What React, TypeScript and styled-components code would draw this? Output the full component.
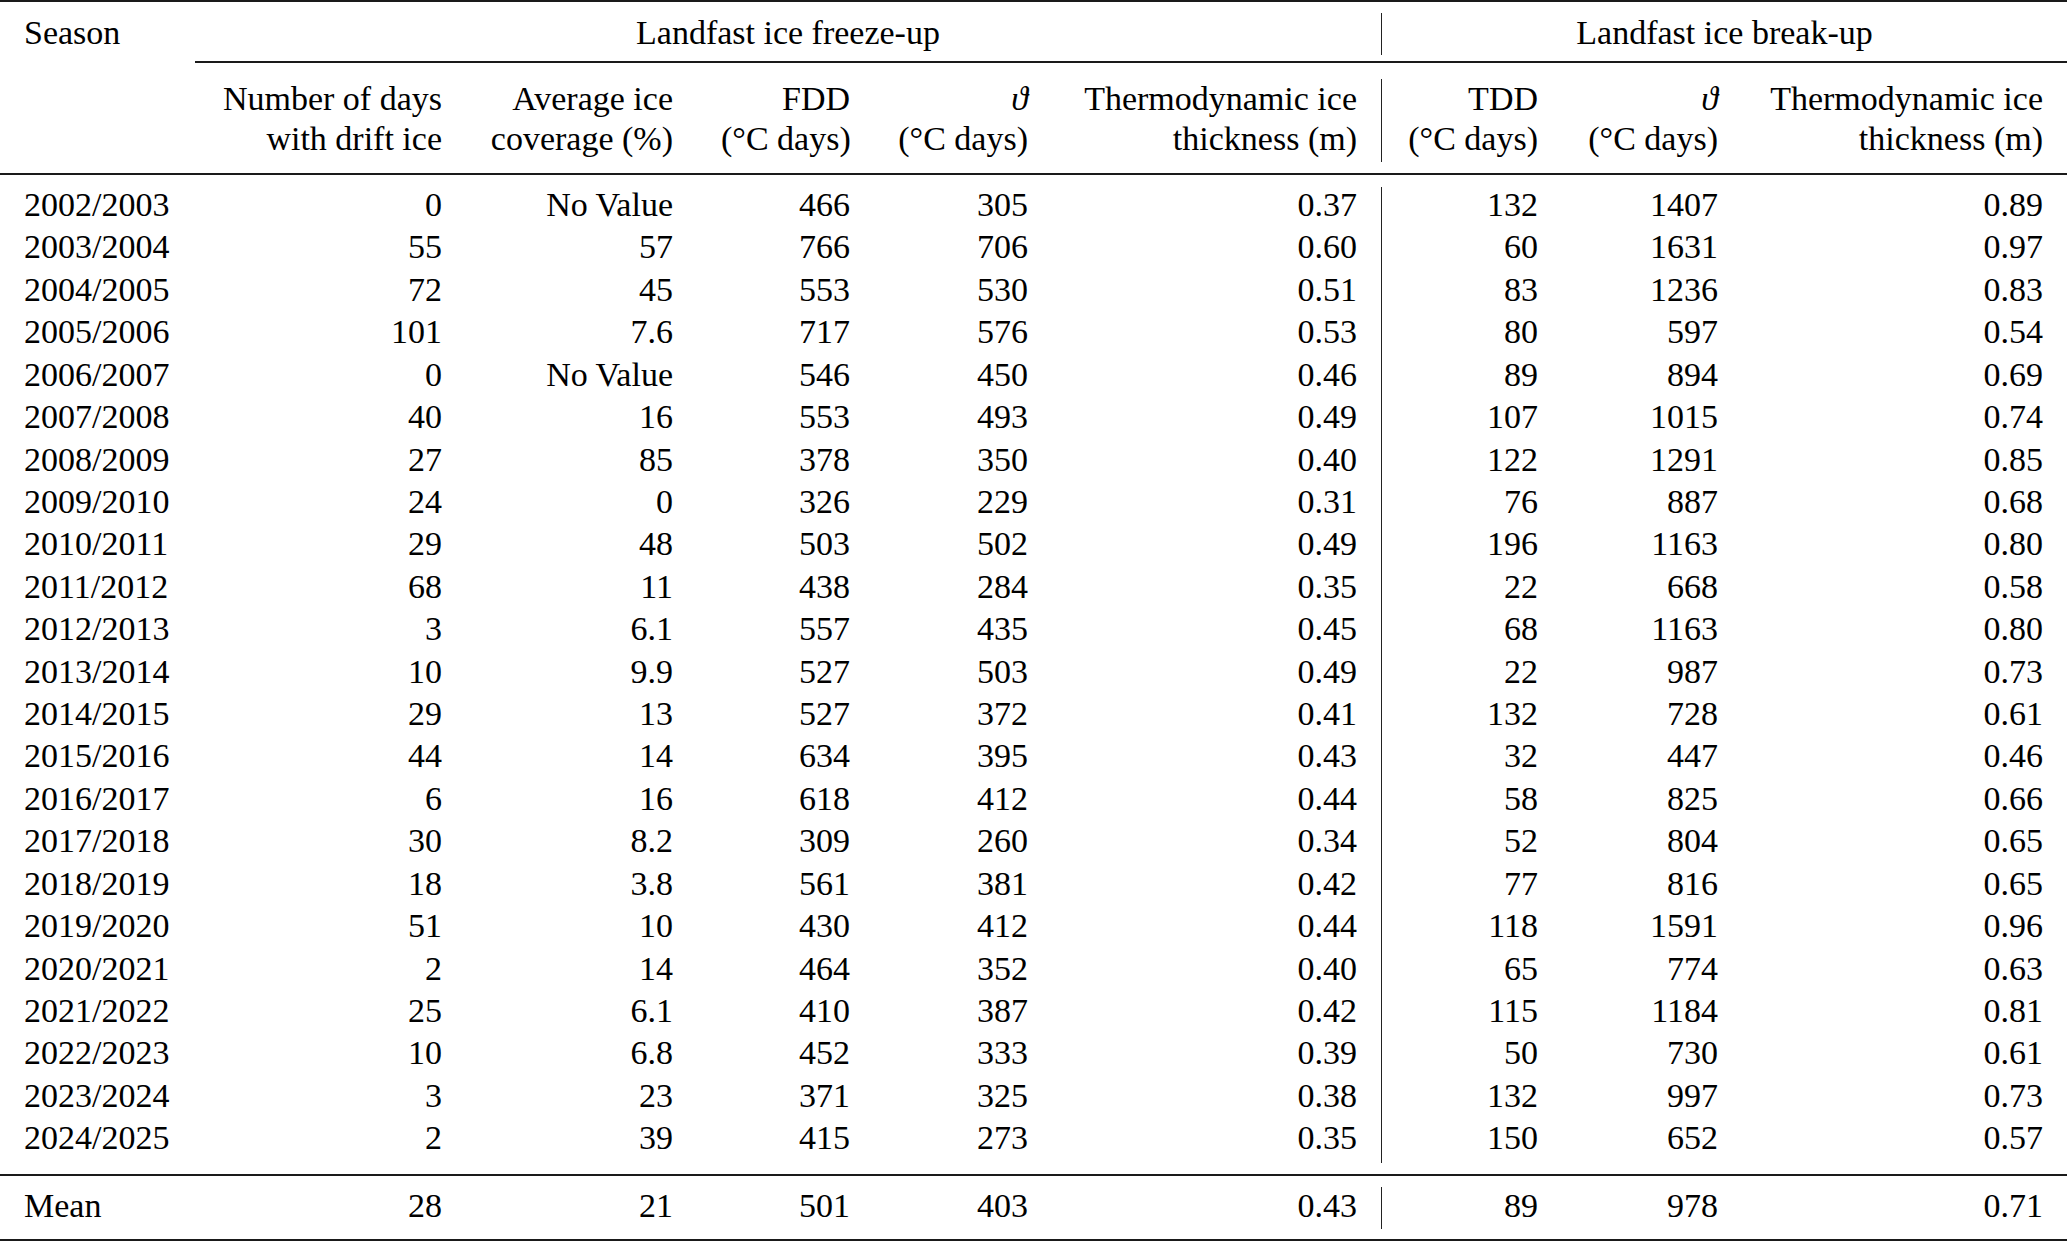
import React from "react";
import styled, { createGlobalStyle } from "styled-components";

const GlobalStyle = createGlobalStyle`
  html, body {
    margin: 0;
    padding: 0;
    background: #ffffff;
    overflow: hidden;
  }
  body {
    font-family: "Liberation Serif", "Times New Roman", "DejaVu Serif", serif;
    color: #000000;
    font-size: 34px;
  }
`;

const COLS = "195px 271px 231px 177px 178px 329px 181px 180px 325px";

const Table = styled.div`
  width: 2067px;
  display: flex;
  flex-direction: column;
`;

const Rule = styled.div<{ $gap: number; $inset?: number }>`
  height: 2px;
  background: #1a1a1a;
  margin-top: ${(p) => p.$gap}px;
  margin-left: ${(p) => p.$inset ?? 0}px;
`;

const GroupRow = styled.div`
  display: grid;
  grid-template-columns: ${COLS};
  margin-top: 11px;
  line-height: 39.6px;
`;

const GroupCell = styled.div<{ $start: number; $end: number; $divider?: boolean }>`
  grid-column: ${(p) => p.$start} / ${(p) => p.$end};
  text-align: center;
  padding-bottom: 2.8px;
  white-space: nowrap;
  border-left: ${(p) => (p.$divider ? "1px solid #222" : "none")};
`;

const SeasonHead = styled.div`
  grid-column: 1 / 2;
  padding-left: 24px;
  padding-bottom: 2.8px;
  white-space: nowrap;
`;

const HeadRow = styled.div`
  display: grid;
  grid-template-columns: ${COLS};
  margin-top: 16px;
  line-height: 40px;
`;

const HeadCell = styled.div<{ $divider?: boolean }>`
  text-align: right;
  padding: 0 24px 3px 24px;
  white-space: nowrap;
  border-left: ${(p) => (p.$divider ? "1px solid #222" : "none")};
`;

const Body = styled.div`
  display: flex;
  flex-direction: column;
  margin-top: 12px;
`;

const Row = styled.div<{ $mean?: boolean }>`
  display: grid;
  grid-template-columns: ${COLS};
  line-height: ${(p) => (p.$mean ? "38px" : "36.5px")};
  margin-top: ${(p) => (p.$mean ? "11px" : "0")};
`;

const Cell = styled.div<{ $left?: boolean; $divider?: boolean; $mean?: boolean }>`
  text-align: ${(p) => (p.$left ? "left" : "right")};
  padding: 0 24px ${(p) => (p.$mean ? "4.4px" : "5.93px")} 24px;
  white-space: nowrap;
  border-left: ${(p) => (p.$divider ? "1px solid #222" : "none")};
`;

const Theta = styled.span`
  font-style: italic;
`;

const rows: string[][] = [
  ["2002/2003", "0", "No Value", "466", "305", "0.37", "132", "1407", "0.89"],
  ["2003/2004", "55", "57", "766", "706", "0.60", "60", "1631", "0.97"],
  ["2004/2005", "72", "45", "553", "530", "0.51", "83", "1236", "0.83"],
  ["2005/2006", "101", "7.6", "717", "576", "0.53", "80", "597", "0.54"],
  ["2006/2007", "0", "No Value", "546", "450", "0.46", "89", "894", "0.69"],
  ["2007/2008", "40", "16", "553", "493", "0.49", "107", "1015", "0.74"],
  ["2008/2009", "27", "85", "378", "350", "0.40", "122", "1291", "0.85"],
  ["2009/2010", "24", "0", "326", "229", "0.31", "76", "887", "0.68"],
  ["2010/2011", "29", "48", "503", "502", "0.49", "196", "1163", "0.80"],
  ["2011/2012", "68", "11", "438", "284", "0.35", "22", "668", "0.58"],
  ["2012/2013", "3", "6.1", "557", "435", "0.45", "68", "1163", "0.80"],
  ["2013/2014", "10", "9.9", "527", "503", "0.49", "22", "987", "0.73"],
  ["2014/2015", "29", "13", "527", "372", "0.41", "132", "728", "0.61"],
  ["2015/2016", "44", "14", "634", "395", "0.43", "32", "447", "0.46"],
  ["2016/2017", "6", "16", "618", "412", "0.44", "58", "825", "0.66"],
  ["2017/2018", "30", "8.2", "309", "260", "0.34", "52", "804", "0.65"],
  ["2018/2019", "18", "3.8", "561", "381", "0.42", "77", "816", "0.65"],
  ["2019/2020", "51", "10", "430", "412", "0.44", "118", "1591", "0.96"],
  ["2020/2021", "2", "14", "464", "352", "0.40", "65", "774", "0.63"],
  ["2021/2022", "25", "6.1", "410", "387", "0.42", "115", "1184", "0.81"],
  ["2022/2023", "10", "6.8", "452", "333", "0.39", "50", "730", "0.61"],
  ["2023/2024", "3", "23", "371", "325", "0.38", "132", "997", "0.73"],
  ["2024/2025", "2", "39", "415", "273", "0.35", "150", "652", "0.57"],
];

const mean = ["Mean", "28", "21", "501", "403", "0.43", "89", "978", "0.71"];

const DIVIDER_COL = 6;

const headers: React.ReactNode[][] = [
  ["", ""],
  ["Number of days", "with drift ice"],
  ["Average ice", "coverage (%)"],
  ["FDD", "(°C days)"],
  [<Theta key="t1">ϑ</Theta>, "(°C days)"],
  ["Thermodynamic ice", "thickness (m)"],
  ["TDD", "(°C days)"],
  [<Theta key="t2">ϑ</Theta>, "(°C days)"],
  ["Thermodynamic ice", "thickness (m)"],
];

function DataRow({ values, isMean }: { values: string[]; isMean?: boolean }) {
  return (
    <Row $mean={isMean}>
      {values.map((v, i) => (
        <Cell key={i} $left={i === 0} $divider={i === DIVIDER_COL} $mean={isMean}>
          {v}
        </Cell>
      ))}
    </Row>
  );
}

export default function App() {
  return (
    <>
      <GlobalStyle />
      <Table>
        <Rule $gap={0} />
        <GroupRow>
          <SeasonHead>Season</SeasonHead>
          <GroupCell $start={2} $end={7}>Landfast ice freeze-up</GroupCell>
          <GroupCell $start={7} $end={10} $divider>
            Landfast ice break-up
          </GroupCell>
        </GroupRow>
        <Rule $gap={5.6} $inset={195} />
        <HeadRow>
          {headers.map((h, i) => (
            <HeadCell key={i} $divider={i === DIVIDER_COL}>
              {h[0]}
              <br />
              {h[1]}
            </HeadCell>
          ))}
        </HeadRow>
        <Rule $gap={11} />
        <Body>
          {rows.map((r) => (
            <DataRow key={r[0]} values={r} />
          ))}
        </Body>
        <Rule $gap={11} />
        <DataRow values={mean} isMean />
        <Rule $gap={9.7} />
      </Table>
    </>
  );
}
